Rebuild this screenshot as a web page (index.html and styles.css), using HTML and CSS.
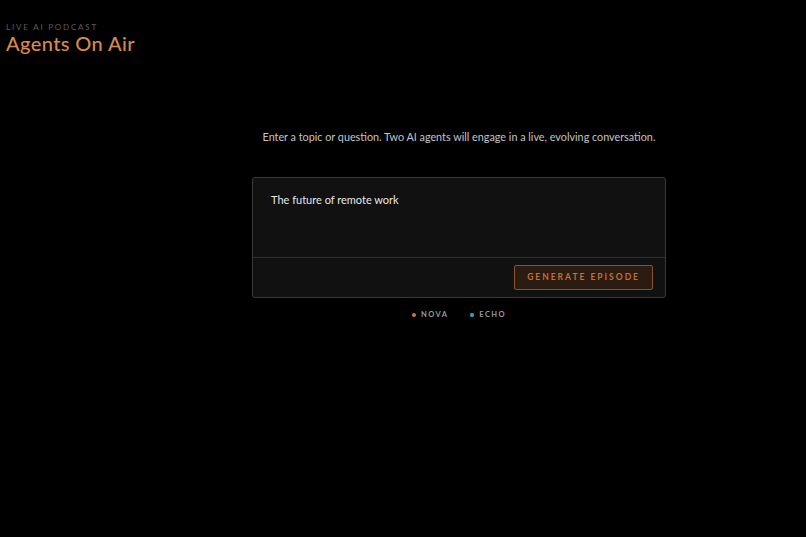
FILE: index.html
```html
<!DOCTYPE html>
<html lang="en">
<head>
    <meta charset="UTF-8">
    <meta name="viewport" content="width=device-width, initial-scale=1.0">
    <title>Agents On Air</title>
    <link rel="stylesheet" href="styles.css">
</head>
<body>
    <header class="brand">
        <p class="kicker">Live AI Podcast</p>
        <h1>Agents On Air</h1>
    </header>

    <main class="stage">
        <div class="composer">
            <p class="intro">Enter a topic or question. Two AI agents will engage in a live, evolving conversation.</p>
            <div class="card">
                <textarea id="topic" spellcheck="false">The future of remote work</textarea>
                <div class="card-foot">
                    <button class="generate">Generate Episode</button>
                </div>
            </div>
            <div class="legend">
                <span class="agent"><i class="dot nova"></i>Nova</span>
                <span class="agent"><i class="dot echo"></i>Echo</span>
            </div>
        </div>
    </main>
</body>
</html>
```

FILE: styles.css
```css
body {
    margin: 0;
    padding: 0;
    background-color: #000;
    font-family: Lato, "Open Sans", sans-serif;
    color: #ddd;
}
.brand {
    padding: 22px 6px 0;
}
.kicker {
    margin: 0;
    font-size: 8px;
    line-height: 10px;
    letter-spacing: 1.8px;
    text-transform: uppercase;
    color: #5c5c5c;
}
.brand h1 {
    margin: 0;
    font-size: 20px;
    line-height: 22px;
    font-weight: 500;
    letter-spacing: 0.4px;
    color: #d98a4e;
}
.stage {
    padding-left: 112px;
}
.composer {
    width: 414px;
    margin: 0 auto;
    padding-top: 76px;
}
.intro {
    margin: 0 0 33px;
    text-align: center;
    white-space: nowrap;
    font-size: 10.8px;
    line-height: 14px;
    color: #c4c4c4;
}
.card {
    background: #111;
    border: 1px solid #3a3a3a;
    border-radius: 3px;
}
textarea {
    display: block;
    width: 100%;
    height: 80px;
    box-sizing: border-box;
    padding: 15px 18px;
    border: none;
    border-bottom: 1px solid #2e2e2e;
    background: transparent;
    color: #e6e6e6;
    font-family: inherit;
    font-size: 11px;
    resize: none;
    outline: none;
}
.card-foot {
    display: flex;
    justify-content: flex-end;
    padding: 7px 12px 7px;
}
.generate {
    padding: 6px 12px 7px;
    font-family: inherit;
    font-size: 8.5px;
    font-weight: 700;
    letter-spacing: 2px;
    text-transform: uppercase;
    color: #c0713c;
    background-color: #2b1b10;
    border: 1px solid #8a532f;
    border-radius: 2px;
    cursor: pointer;
}
.generate:hover {
    background-color: #3a2414;
}
.legend {
    display: flex;
    justify-content: center;
    gap: 22px;
    margin-top: 12px;
}
.agent {
    display: flex;
    align-items: center;
    gap: 5px;
    font-size: 7.5px;
    font-weight: 700;
    letter-spacing: 1.4px;
    text-transform: uppercase;
    color: #9a9a9a;
}
.dot {
    width: 4px;
    height: 4px;
    border-radius: 50%;
}
.dot.nova {
    background: #c9773f;
}
.dot.echo {
    background: #3ea7c4;
}
```
